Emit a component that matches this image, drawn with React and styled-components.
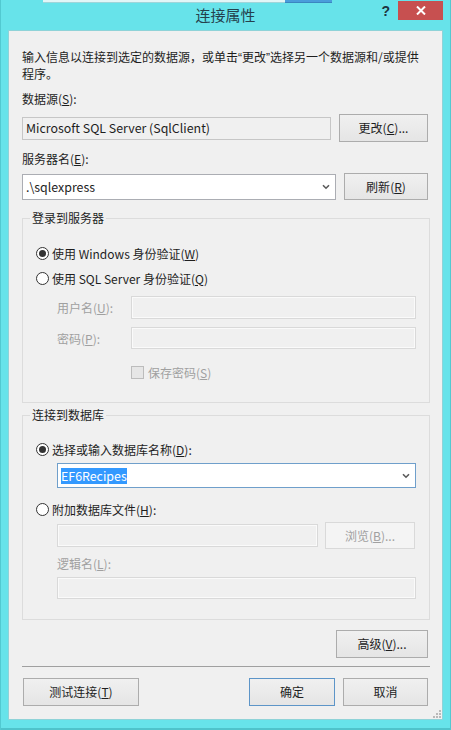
import React from 'react';
import styled, { createGlobalStyle } from 'styled-components';

const GlobalStyle = createGlobalStyle`
  html, body {
    margin: 0;
    padding: 0;
    background: #67e3ea;
  }
  body {
    font-family: "Noto Sans CJK SC", sans-serif;
    font-size: 12px;
    color: #000;
  }
  * {
    box-sizing: border-box;
  }
`;

const Window = styled.div`
  position: relative;
  width: 451px;
  height: 730px;
  background: #67e3ea;
  box-shadow: inset 1px 0 0 #52c9d1, inset -1px 0 0 #52c9d1, inset 0 -2px 0 #4fc3cb;
  display: flex;
  flex-direction: column;
  overflow: hidden;
`;

// edge of another window peeking over the top of this one
const Peek = styled.div`
  position: absolute;
  top: 0;
  left: 43px;
  display: flex;
  height: 3px;
`;

const PeekPart = styled.div`
  width: ${p => p.w}px;
  height: 3px;
  background: ${p => p.color};
  border-bottom: 1px solid ${p => p.edge};
`;

const TitleBar = styled.div`
  height: 30px;
  display: grid;
  grid-template-columns: 1fr auto 1fr;
  align-items: start;
`;

const Title = styled.div`
  grid-column: 2;
  padding-top: 6px;
  font-size: 15px;
  line-height: 18px;
  color: #25414d;
`;

const Controls = styled.div`
  grid-column: 3;
  justify-self: end;
  display: flex;
  align-items: flex-start;
  gap: 8px;
  padding-right: 8px;
`;

const Help = styled.span`
  margin-top: 4px;
  font-family: "Liberation Sans", sans-serif;
  font-weight: bold;
  font-size: 14px;
  line-height: 14px;
  color: #1d3440;
`;

const Close = styled.div`
  margin-top: 1px;
  width: 45px;
  height: 19px;
  background: #c75050;
  display: flex;
  align-items: center;
  justify-content: center;
`;

const Client = styled.div`
  position: relative;
  margin: 0 8px;
  height: 690px;
  background: #f0f0f0;
  border: 1px solid #8fd3d8;
  padding: 18px 12px 0 13px;
  display: flex;
  flex-direction: column;
`;

const Desc = styled.p`
  margin: 0;
  line-height: 16px;
  white-space: nowrap;
  color: #1e1e1e;
`;

const Quote = styled.span`
  font-family: "Liberation Sans", sans-serif;
`;

const Label = styled.div`
  margin-top: ${p => p.mt || 0}px;
  line-height: 16px;
  color: ${p => (p.disabled ? '#a0a0a0' : '#1e1e1e')};
`;

const Row = styled.div`
  display: flex;
  align-items: center;
  justify-content: space-between;
  margin-top: ${p => p.mt || 0}px;
  height: ${p => p.h}px;
`;

const TextBox = styled.div`
  width: ${p => p.w}px;
  height: ${p => p.h}px;
  margin-top: ${p => p.mt || 0}px;
  padding: 0 3px;
  display: flex;
  align-items: center;
  line-height: 16px;
  font-size: ${p => p.fs || 12}px;
  background: ${p => (p.readOnly || p.disabled ? '#f0f0f0' : '#fff')};
  border: 1px solid ${p => (p.disabled ? '#d9d9d9' : p.readOnly ? '#c6c6c6' : '#abadb3')};
  box-shadow: ${p => (p.disabled ? 'inset 0 0 0 1px #fafafa' : 'none')};
  color: #1e1e1e;
`;

const Combo = styled(TextBox)`
  justify-content: space-between;
  padding-right: 5px;
  border-color: ${p => (p.focused ? '#6f9fcb' : '#abadb3')};
`;

const Selected = styled.span`
  background: #3399ff;
  color: #fff;
`;

const Button = styled.div`
  width: ${p => p.w}px;
  height: ${p => p.h || 28}px;
  margin-left: ${p => p.ml || 0}px;
  margin-right: ${p => p.mr || 0}px;
  display: flex;
  align-items: center;
  justify-content: center;
  background: ${p => (p.disabled ? '#f4f4f4' : 'linear-gradient(#f0f0f0, #e5e5e5)')};
  border: 1px solid ${p => (p.disabled ? '#d9d9d9' : p.primary ? '#5d95c8' : '#acacac')};
  color: ${p => (p.disabled ? '#a0a0a0' : '#1e1e1e')};
  line-height: 16px;
`;

const Group = styled.fieldset`
  margin: ${p => p.mt}px 0 0 0;
  padding: 0;
  border: 1px solid #dcdcdc;
  min-width: 0;
`;

const Legend = styled.legend`
  margin-left: 7px;
  padding: 0 2px;
  line-height: 16px;
  color: #1e1e1e;
`;

const GroupBody = styled.div`
  padding: ${p => p.pt}px 13px ${p => p.pb}px 13px;
  display: flex;
  flex-direction: column;
`;

const Option = styled.div`
  display: flex;
  align-items: center;
  gap: 3px;
  height: 20px;
  margin-top: ${p => p.mt || 0}px;
  color: #1e1e1e;
`;

const Radio = styled.span`
  width: 13px;
  height: 13px;
  border-radius: 50%;
  border: 1px solid #333;
  background: #fff;
  display: flex;
  align-items: center;
  justify-content: center;
  &::after {
    content: '';
    width: 7px;
    height: 7px;
    border-radius: 50%;
    background: ${p => (p.checked ? '#333' : 'transparent')};
  }
`;

const Indent = styled.div`
  margin-left: 21px;
  margin-top: ${p => p.mt || 0}px;
  display: flex;
  align-items: center;
  height: ${p => p.h}px;
`;

const FieldLabel = styled.span`
  width: 74px;
  color: #a0a0a0;
`;

const CheckRow = styled.div`
  margin-left: 95px;
  margin-top: ${p => p.mt}px;
  display: flex;
  align-items: center;
  gap: 4px;
  height: 16px;
  color: #a0a0a0;
`;

const Check = styled.span`
  width: 13px;
  height: 13px;
  border: 1px solid #bcbcbc;
  background: #e6e6e6;
`;

const Stack = styled.div`
  margin-left: 21px;
  margin-top: ${p => p.mt || 0}px;
  display: flex;
  flex-direction: column;
`;

const FileRow = styled.div`
  display: flex;
  align-items: center;
  gap: 7px;
  height: 27px;
`;

const Actions = styled.div`
  display: flex;
  justify-content: flex-end;
  gap: 8px;
  margin-top: ${p => p.mt}px;
`;

const Separator = styled.div`
  margin-top: 8px;
  height: 1px;
  background: #a0a0a0;
`;

const Spacer = styled.div`
  flex: 1;
`;

const Grip = styled.svg`
  position: absolute;
  right: 1px;
  bottom: 1px;
`;

const Key = ({ k }) => (
  <>
    (<u>{k}</u>)
  </>
);

const Chevron = () => (
  <svg width="8" height="6" viewBox="0 0 8 6">
    <path d="M1 1.2 L4 4.2 L7 1.2" fill="none" stroke="#5a5a5a" strokeWidth="1.6" />
  </svg>
);

const App = () => (
  <>
    <GlobalStyle />
    <Window>
      <Peek>
        <PeekPart w={242} color="#e2f6f7" edge="#9fd5da" />
        <PeekPart w={47} color="#4a9ddb" edge="#3b86c0" />
      </Peek>
      <TitleBar>
        <Title>连接属性</Title>
        <Controls>
          <Help>?</Help>
          <Close>
            <svg width="10" height="9" viewBox="0 0 10 9">
              <path d="M1 0.5 L9 8.5 M9 0.5 L1 8.5" stroke="#fff" strokeWidth="2" />
            </svg>
          </Close>
        </Controls>
      </TitleBar>

      <Client>
        <Desc>
          输入信息以连接到选定的数据源，或单击<Quote>“</Quote>更改<Quote>”</Quote>
          选择另一个数据源和/或提供
          <br />
          程序。
        </Desc>

        <Label mt={9}>
          数据源<Key k="S" />:
        </Label>
        <Row mt={7} h={28}>
          <TextBox readOnly w={309} h={23} fs={12.4}>
            Microsoft SQL Server (SqlClient)
          </TextBox>
          <Button w={89} mr={2}>
            <span>
              更改<Key k="C" />...
            </span>
          </Button>
        </Row>

        <Label mt={9}>
          服务器名<Key k="E" />:
        </Label>
        <Row mt={6} h={27}>
          <Combo w={314} h={26} fs={12.4}>
            <span>.\sqlexpress</span>
            <Chevron />
          </Combo>
          <Button w={84} h={27} mr={2}>
            <span>
              刷新<Key k="R" />
            </span>
          </Button>
        </Row>

        <Group mt={10}>
          <Legend>登录到服务器</Legend>
          <GroupBody pt={17} pb={22}>
            <Option>
              <Radio checked />
              <span>
                使用 Windows 身份验证<Key k="W" />
              </span>
            </Option>
            <Option mt={5}>
              <Radio />
              <span>
                使用 SQL Server 身份验证<Key k="Q" />
              </span>
            </Option>
            <Indent mt={8} h={23}>
              <FieldLabel>
                用户名<Key k="U" />:
              </FieldLabel>
              <TextBox disabled w={285} h={23} />
            </Indent>
            <Indent mt={8} h={22}>
              <FieldLabel>
                密码<Key k="P" />:
              </FieldLabel>
              <TextBox disabled w={285} h={22} />
            </Indent>
            <CheckRow mt={15}>
              <Check />
              <span>
                保存密码<Key k="S" />
              </span>
            </CheckRow>
          </GroupBody>
        </Group>

        <Group mt={4}>
          <Legend>连接到数据库</Legend>
          <GroupBody pt={16} pb={20}>
            <Option>
              <Radio checked />
              <span>
                选择或输入数据库名称<Key k="D" />:
              </span>
            </Option>
            <Stack mt={4}>
              <Combo focused w={359} h={25} fs={12.4}>
                <Selected>EF6Recipes</Selected>
                <Chevron />
              </Combo>
            </Stack>
            <Option mt={11}>
              <Radio />
              <span>
                附加数据库文件<Key k="H" />:
              </span>
            </Option>
            <Stack mt={3}>
              <FileRow>
                <TextBox disabled w={261} h={23} />
                <Button disabled w={90} h={27}>
                  <span>
                    浏览<Key k="B" />...
                  </span>
                </Button>
              </FileRow>
              <Label disabled mt={7}>
                逻辑名<Key k="L" />:
              </Label>
              <TextBox disabled w={359} h={22} mt={5} />
            </Stack>
          </GroupBody>
        </Group>

        <Actions mt={10}>
          <Button w={92} mr={2}>
            <span>
              高级<Key k="V" />...
            </span>
          </Button>
        </Actions>
        <Separator />
        <Actions mt={11}>
          <Button w={116} ml={1}>
            <span>
              测试连接<Key k="T" />
            </span>
          </Button>
          <Spacer />
          <Button primary w={86}>
            确定
          </Button>
          <Button w={85} mr={2}>
            取消
          </Button>
        </Actions>

        <Grip width="8" height="8" viewBox="0 0 8 8">
          <g fill="#b9b9b9">
            <rect x="6" y="0" width="2" height="2" />
            <rect x="3" y="3" width="2" height="2" />
            <rect x="6" y="3" width="2" height="2" />
            <rect x="0" y="6" width="2" height="2" />
            <rect x="3" y="6" width="2" height="2" />
            <rect x="6" y="6" width="2" height="2" />
          </g>
        </Grip>
      </Client>
    </Window>
  </>
);

export default App;
